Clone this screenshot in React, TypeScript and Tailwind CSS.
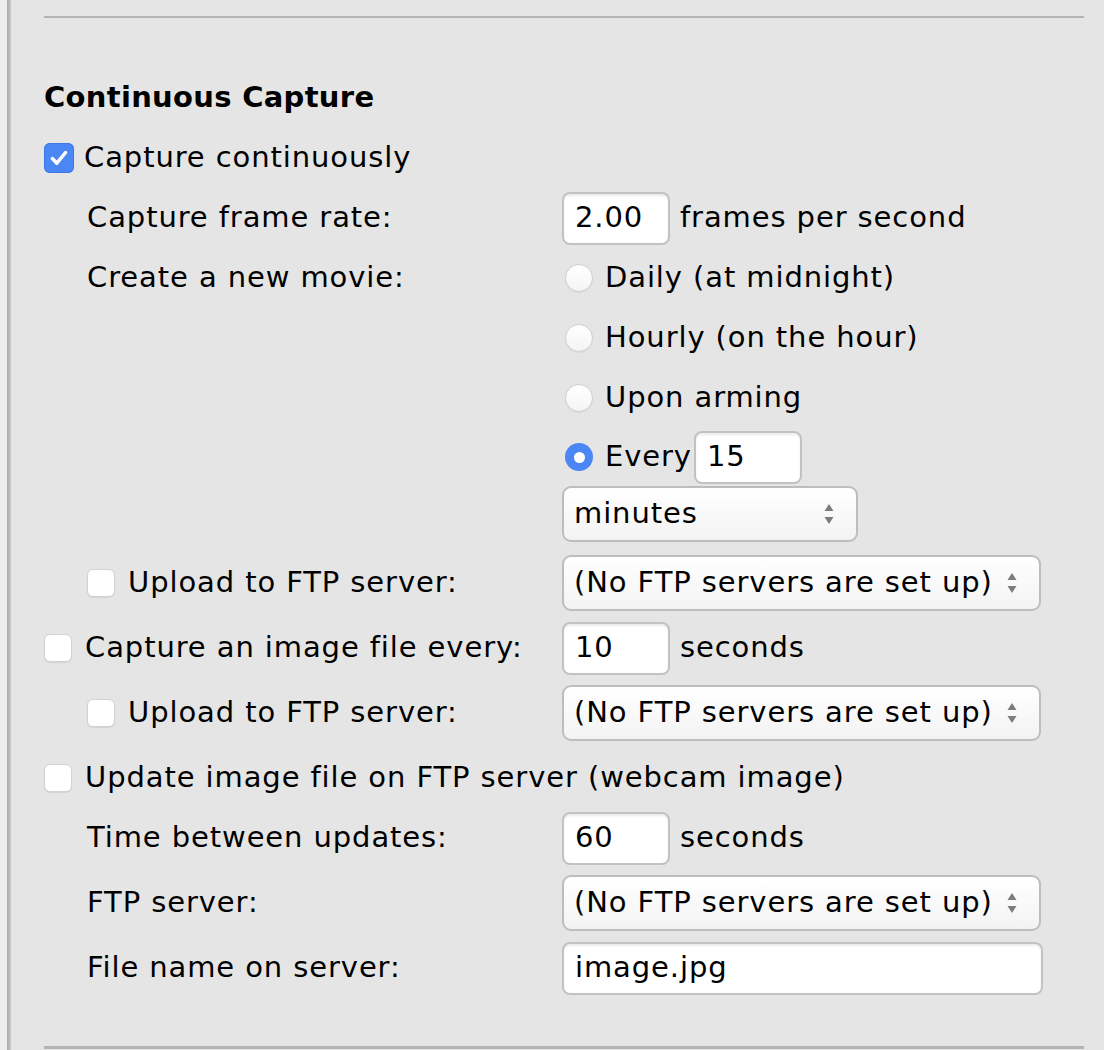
import React from 'react';

const FONT = { fontFamily: '"DejaVu Sans", "Noto Sans", sans-serif' };

function Checkbox({ checked = false }: { checked?: boolean }) {
  if (checked) {
    return (
      <span className="flex h-[30px] w-[30px] shrink-0 items-center justify-center rounded-[6px] bg-[#4a87f5] shadow-[inset_0_0_0_1px_#3d78e6]">
        <svg width="22" height="22" viewBox="0 0 20 20" fill="none">
          <path d="M4 10.5l4 4.2L16 5" stroke="white" strokeWidth="3.2" strokeLinecap="round" strokeLinejoin="round" />
        </svg>
      </span>
    );
  }
  return (
    <span className="block h-[28px] w-[28px] shrink-0 rounded-[6px] border border-[#d2d2d2] bg-white shadow-[0_1px_1px_rgba(0,0,0,0.08)]" />
  );
}

function Radio({ checked = false }: { checked?: boolean }) {
  if (checked) {
    return (
      <span className="flex h-[28px] w-[28px] shrink-0 items-center justify-center rounded-full bg-[#4a87f5]">
        <span className="h-[11px] w-[11px] rounded-full bg-white" />
      </span>
    );
  }
  return (
    <span className="block h-[28px] w-[28px] shrink-0 rounded-full border border-[#d0d0d0] bg-gradient-to-b from-white to-[#f4f4f4] shadow-[0_1px_1px_rgba(0,0,0,0.06)]" />
  );
}

function TextBox({ value, className }: { value: string; className: string }) {
  return (
    <div
      className={`flex h-[53px] shrink-0 items-center rounded-[8px] border-2 border-[#c2c2c2] bg-white pl-[11px] shadow-[inset_0_2px_2px_rgba(0,0,0,0.08)] ${className}`}
    >
      {value}
    </div>
  );
}

function Stepper() {
  return (
    <svg width="14" height="28" viewBox="0 0 14 28" className="shrink-0">
      <path d="M7 4L11.5 11H2.5z" fill="#7c7c7c" />
      <path d="M7 24L11.5 17H2.5z" fill="#7c7c7c" />
    </svg>
  );
}

function Select({ value, className }: { value: string; className: string }) {
  return (
    <div
      className={`flex h-[56px] shrink-0 items-center justify-between rounded-[9px] border-2 border-[#bdbdbd] bg-gradient-to-b from-white to-[#f3f3f3] pl-[10px] pr-[20px] ${className}`}
    >
      <span className="whitespace-nowrap">{value}</span>
      <Stepper />
    </div>
  );
}

function Row({ h, children }: { h: string; children: React.ReactNode }) {
  return <div className={`flex items-center ${h}`}>{children}</div>;
}

function Label({ indent = false, children }: { indent?: boolean; children: React.ReactNode }) {
  return (
    <div className={`flex w-[518px] shrink-0 items-center whitespace-nowrap ${indent ? 'pl-[43px]' : ''}`}>
      {children}
    </div>
  );
}

export default function App() {
  return (
    <div
      className="flex h-[1050px] w-[1104px] overflow-hidden bg-[#e5e5e5] text-[29px] tracking-[0.9px] text-black"
      style={FONT}
    >
      <div className="w-[7px] shrink-0 bg-[#eeeeee]" />
      <div className="w-[4px] shrink-0 bg-gradient-to-r from-[#a9a9a9] to-[#c9c9c9]" />
      <div className="flex flex-1 flex-col pl-[33px] pr-[20px]">
        <div className="mt-[16px] h-[2px] bg-[#b4b4b4]" />

        <div className="mt-[50px] flex h-[60px] items-center text-[29px] font-bold tracking-[0.3px]">
          Continuous Capture
        </div>

        <Row h="h-[60px]">
          <Checkbox checked />
          <span className="ml-[10px]">Capture continuously</span>
        </Row>

        <Row h="h-[60px]">
          <Label indent>Capture frame rate:</Label>
          <TextBox value="2.00" className="w-[108px]" />
          <span className="ml-[10px]">frames per second</span>
        </Row>

        <Row h="h-[60px]">
          <Label indent>Create a new movie:</Label>
          <span className="ml-[3px]"><Radio /></span>
          <span className="ml-[12px]">Daily (at midnight)</span>
        </Row>
        <Row h="h-[60px]">
          <div className="w-[518px] shrink-0" />
          <span className="ml-[3px]"><Radio /></span>
          <span className="ml-[12px]">Hourly (on the hour)</span>
        </Row>
        <Row h="h-[60px]">
          <div className="w-[518px] shrink-0" />
          <span className="ml-[3px]"><Radio /></span>
          <span className="ml-[12px]">Upon arming</span>
        </Row>
        <Row h="h-[58px]">
          <div className="w-[518px] shrink-0" />
          <span className="ml-[3px]"><Radio checked /></span>
          <span className="ml-[12px]">Every</span>
          <TextBox value="15" className="ml-[2px] w-[108px]" />
        </Row>
        <div className="flex h-[67px] items-start">
          <div className="w-[518px] shrink-0" />
          <Select value="minutes" className="w-[296px]" />
        </div>

        <Row h="h-[60px]">
          <Label indent>
            <Checkbox />
            <span className="ml-[13px]">Upload to FTP server:</span>
          </Label>
          <Select value="(No FTP servers are set up)" className="w-[479px]" />
        </Row>

        <Row h="h-[70px]">
          <Label>
            <Checkbox />
            <span className="ml-[13px]">Capture an image file every:</span>
          </Label>
          <TextBox value="10" className="w-[108px]" />
          <span className="ml-[10px]">seconds</span>
        </Row>

        <Row h="h-[60px]">
          <Label indent>
            <Checkbox />
            <span className="ml-[13px]">Upload to FTP server:</span>
          </Label>
          <Select value="(No FTP servers are set up)" className="w-[479px]" />
        </Row>

        <Row h="h-[70px]">
          <Checkbox />
          <span className="ml-[13px] whitespace-nowrap">Update image file on FTP server (webcam image)</span>
        </Row>

        <Row h="h-[50px]">
          <Label indent>Time between updates:</Label>
          <TextBox value="60" className="w-[108px]" />
          <span className="ml-[10px]">seconds</span>
        </Row>

        <Row h="h-[80px]">
          <Label indent>FTP server:</Label>
          <Select value="(No FTP servers are set up)" className="w-[479px]" />
        </Row>

        <Row h="h-[50px]">
          <Label indent>File name on server:</Label>
          <TextBox value="image.jpg" className="w-[481px]" />
        </Row>

        <div className="mt-[53px] h-[3px] bg-[#b4b4b4]" />
      </div>
    </div>
  );
}
